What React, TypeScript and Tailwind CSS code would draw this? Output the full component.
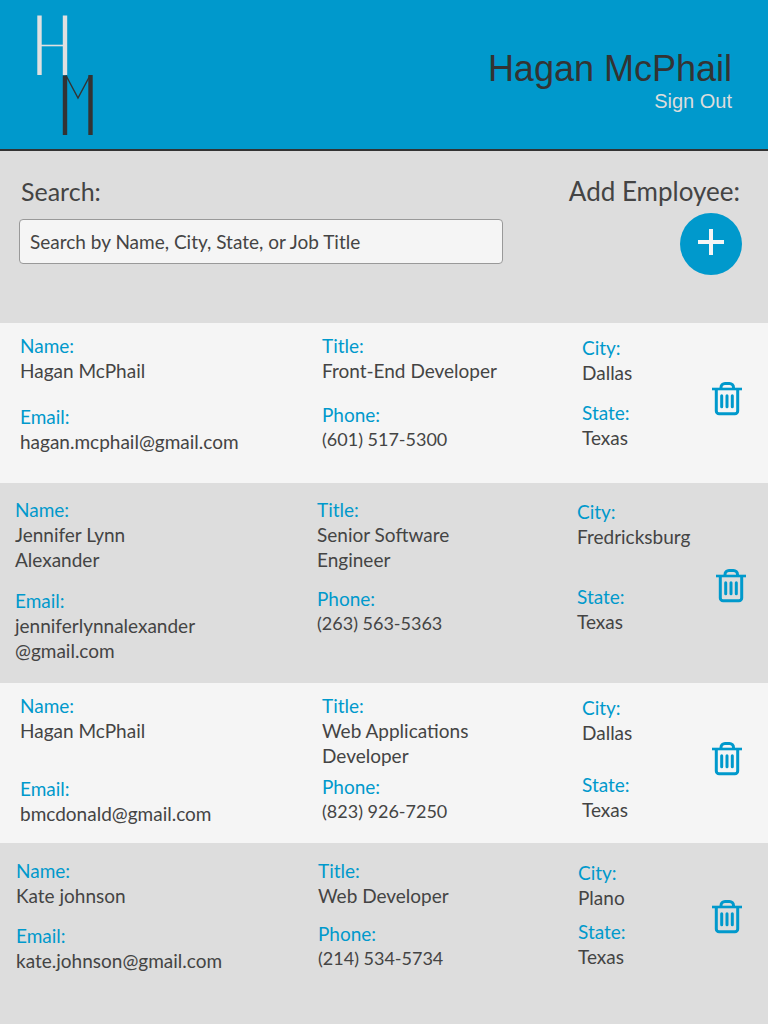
type Employee = {
  id: number;
  name: string;
  email: string[];
  title: string;
  phone: string;
  city: string;
  state: string;
  row: string;
  upper: string;
  trash: string;
};

const employees: Employee[] = [
  {
    id: 1,
    name: "Hagan McPhail",
    email: ["hagan.mcphail@gmail.com"],
    title: "Front-End Developer",
    phone: "(601) 517-5300",
    city: "Dallas",
    state: "Texas",
    row: "min-h-[160px] bg-[#f5f5f5] pt-[11px] pl-5 pr-[26px]",
    upper: "min-h-[65px]",
    trash: "mt-12",
  },
  {
    id: 2,
    name: "Jennifer Lynn Alexander",
    email: ["jenniferlynnalexander", "@gmail.com"],
    title: "Senior Software Engineer",
    phone: "(263) 563-5363",
    city: "Fredricksburg",
    state: "Texas",
    row: "min-h-[200px] bg-[#dddddd] pt-[15px] pl-[15px] pr-[22px]",
    upper: "min-h-[85px]",
    trash: "mt-[71px]",
  },
  {
    id: 3,
    name: "Hagan McPhail",
    email: ["bmcdonald@gmail.com"],
    title: "Web Applications Developer",
    phone: "(823) 926-7250",
    city: "Dallas",
    state: "Texas",
    row: "min-h-[160px] bg-[#f5f5f5] pt-[11px] pl-5 pr-[26px]",
    upper: "min-h-[77px]",
    trash: "mt-12",
  },
  {
    id: 4,
    name: "Kate johnson",
    email: ["kate.johnson@gmail.com"],
    title: "Web Developer",
    phone: "(214) 534-5734",
    city: "Plano",
    state: "Texas",
    row: "min-h-[160px] grow bg-[#dddddd] pt-4 pl-4 pr-[26px]",
    upper: "min-h-[59px]",
    trash: "mt-[41px]",
  },
];

function Logo() {
  return (
    <svg width="60" height="122" viewBox="0 0 60 122" fill="none" role="img" aria-label="HM">
      <path d="M3.5 .5v59.500M29 .5v59.500" stroke="#e0e0e0" strokeWidth="4.4" />
      <path d="M5 30.500h23" stroke="#e0e0e0" strokeWidth="1.6" />
      <path d="M29 60.500v59.500M54.500 60v60" stroke="#333333" strokeWidth="4.4" />
      <path d="M30 60.500l12 22.500 12-22.500" stroke="#333333" strokeWidth="1.4" />
    </svg>
  );
}

function TrashIcon() {
  return (
    <svg width="30" height="34" viewBox="0 0 30 34" fill="none" stroke="#0099cc" aria-hidden="true">
      <path d="M0 7h30" strokeWidth="2.6" />
      <path d="M9 7V5.500a4 4 0 0 1 4-4h4.500a4 4 0 0 1 4 4V7" strokeWidth="3" />
      <path d="M4.300 7v22a2.800 2.800 0 0 0 2.800 2.800h15.800a2.800 2.800 0 0 0 2.800-2.800V7" strokeWidth="3" />
      <path d="M9.700 13.800v11M15 13.800v11M20.300 13.800v11" strokeWidth="3" strokeLinecap="round" />
    </svg>
  );
}

function Field({ label, lines, className = "" }: { label: string; lines: string[]; className?: string }) {
  return (
    <div className={className}>
      <dt className="text-[19px] leading-6 text-[#0099cc]">{label}</dt>
      <dd className="leading-[25px]">
        {lines.map((line) => (
          <span key={line} className="block">
            {line}
          </span>
        ))}
      </dd>
    </div>
  );
}

function EmployeeRow({ employee }: { employee: Employee }) {
  return (
    <li
      className={`grid grid-cols-2 items-start pb-4 text-[19px] md:grid-cols-[302px_260px_1fr_30px] ${employee.row}`}
    >
      <dl className="flex flex-col gap-1.5">
        <div className="max-w-[150px]">
          <Field label="Name:" lines={[employee.name]} className={employee.upper} />
        </div>
        <Field label="Email:" lines={employee.email} />
      </dl>
      <dl className="flex max-w-[180px] flex-col gap-1">
        <Field label="Title:" lines={[employee.title]} className={employee.upper} />
        <Field label="Phone:" lines={[employee.phone]} className="text-[18px]" />
      </dl>
      <dl className="flex flex-col pt-0.5">
        <Field label="City:" lines={[employee.city]} className={employee.upper} />
        <Field label="State:" lines={[employee.state]} />
      </dl>
      <button type="button" aria-label={`Delete ${employee.name}`} className={`w-[30px] ${employee.trash}`}>
        <TrashIcon />
      </button>
    </li>
  );
}

export default function App() {
  return (
    <div className="flex min-h-screen flex-col bg-[#dddddd] font-[Lato,sans-serif] text-[#444444]">
      <header className="flex items-start justify-between border-b-2 border-[#333333] bg-[#0099cc] pt-[15px] pr-9 pb-3 pl-9 font-['Liberation_Sans',sans-serif]">
        <Logo />
        <div className="flex flex-col items-end pt-8">
          <h1 className="text-[36px] leading-[44px] text-[#333333]">Hagan McPhail</h1>
          <a href="#sign-out" className="text-[20px] leading-5 text-[#dddddd]">
            Sign Out
          </a>
        </div>
      </header>

      <main className="flex grow flex-col">
        <section className="flex min-h-[172px] items-start justify-between gap-4 pr-[26px] pl-[19px] pt-6">
          <div className="grow">
            <label htmlFor="search" className="block pl-0.5 text-[25px] leading-8">
              Search:
            </label>
            <input
              id="search"
              type="text"
              placeholder="Search by Name, City, State, or Job Title"
              className="mt-3 h-[45px] w-full max-w-[484px] rounded border border-[#999999] bg-[#f5f5f5] px-2.5 text-[19px] placeholder:text-[#444444] placeholder:opacity-100"
            />
          </div>
          <div className="flex flex-col items-end">
            <label htmlFor="add" className="pr-0.5 text-[26px] leading-8">
              Add Employee:
            </label>
            <button
              id="add"
              type="button"
              className="mt-1.5 flex size-[62px] items-center justify-center rounded-full bg-[#0099cc] pb-1"
            >
              <svg width="26" height="26" viewBox="0 0 26 26" stroke="#f5f5f5" strokeWidth="4" aria-hidden="true">
                <path d="M13 0v26M0 13h26" />
              </svg>
            </button>
          </div>
        </section>

        <ul className="flex grow flex-col">
          {employees.map((employee) => (
            <EmployeeRow key={employee.id} employee={employee} />
          ))}
        </ul>
      </main>
    </div>
  );
}
